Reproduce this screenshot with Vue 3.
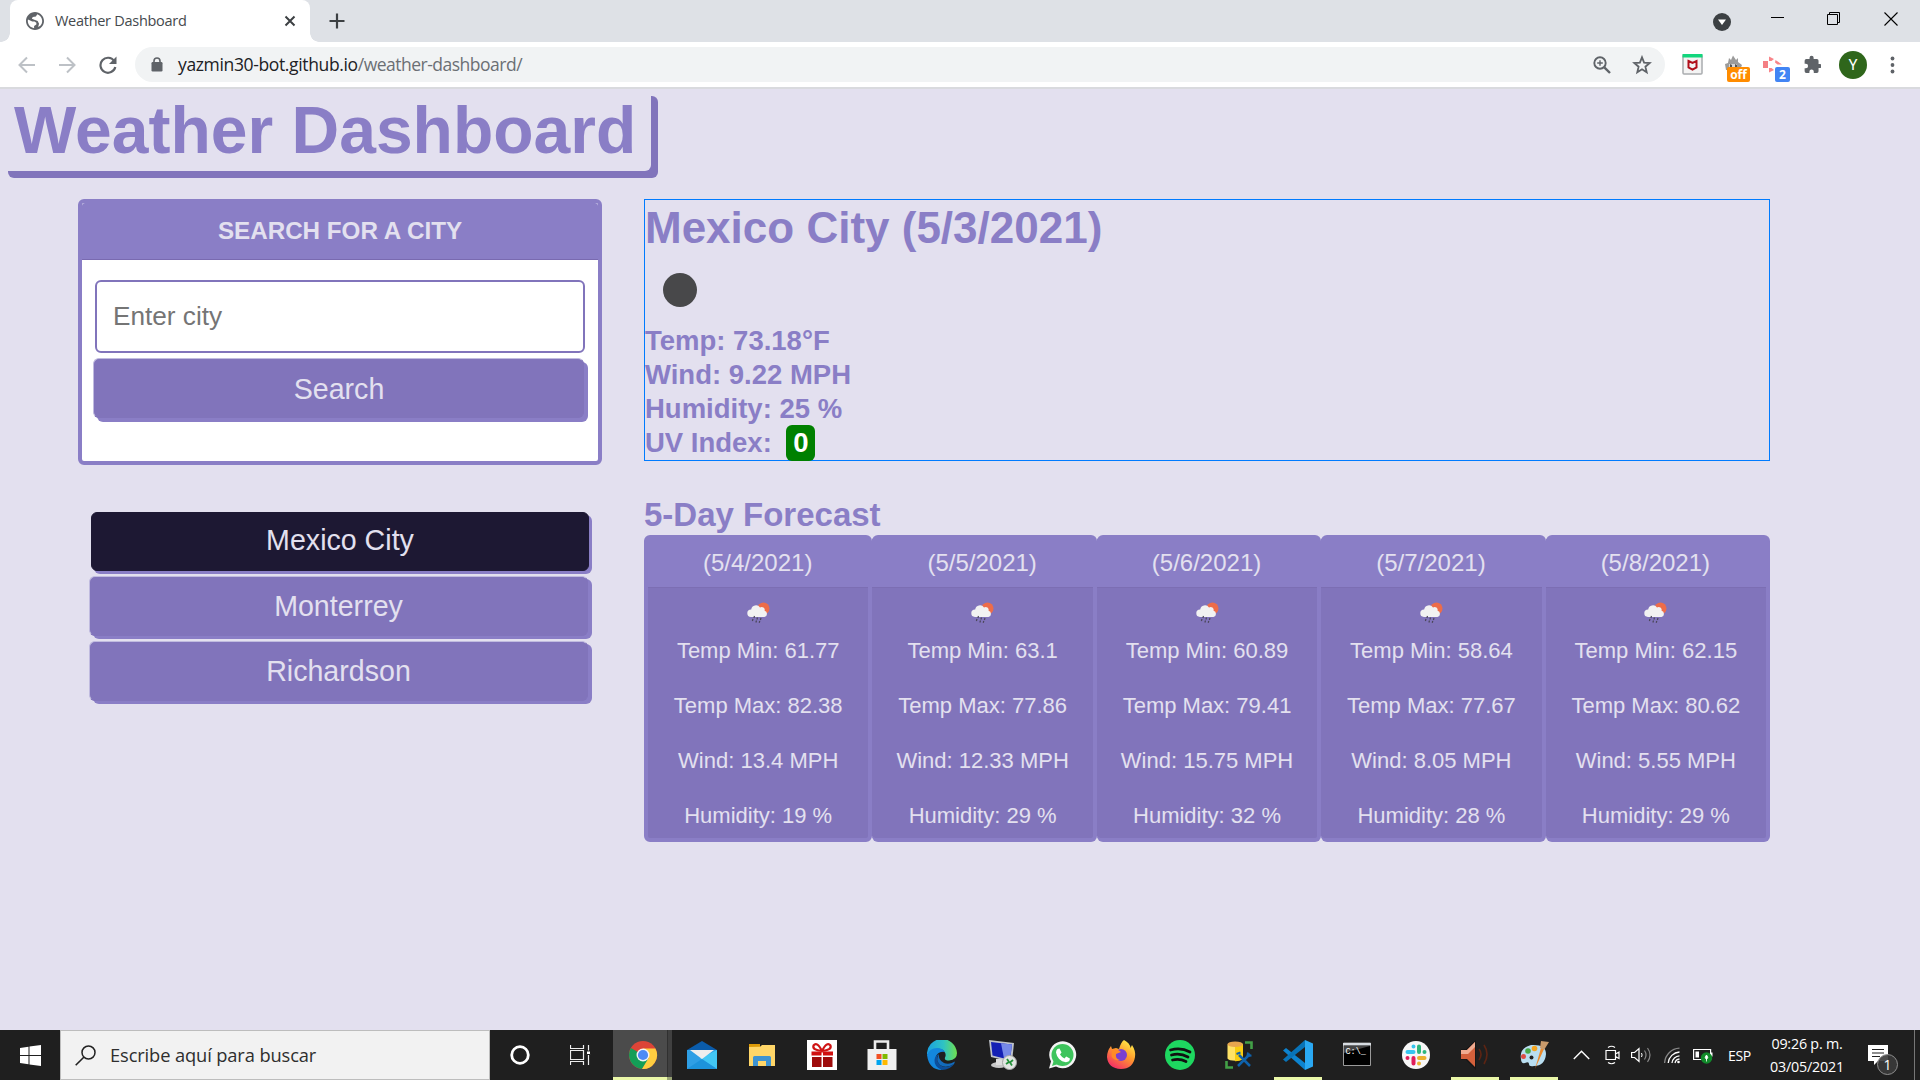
<script setup>
const cities = ['Mexico City', 'Monterrey', 'Richardson']
const activeCity = 'Mexico City'
const forecast = [
  { date: '(5/4/2021)', min: '61.77', max: '82.38', wind: '13.4', humidity: 19 },
  { date: '(5/5/2021)', min: '63.1', max: '77.86', wind: '12.33', humidity: 29 },
  { date: '(5/6/2021)', min: '60.89', max: '79.41', wind: '15.75', humidity: 32 },
  { date: '(5/7/2021)', min: '58.64', max: '77.67', wind: '8.05', humidity: 28 },
  { date: '(5/8/2021)', min: '62.15', max: '80.62', wind: '5.55', humidity: 29 },
]
</script>

<template>
  <div class="screen">
    <header class="tabstrip">
      <div class="tab">
        <svg class="favicon" viewBox="2 2 20 20"><path d="M12 2C6.480 2 2 6.480 2 12s4.480 10 10 10 10-4.480 10-10S17.520 2 12 2zm-1 17.930c-3.950-.49-7-3.850-7-7.930 0-.62.08-1.210.21-1.790L9 12.500h2.500l2 1.500v2l-2.500 1.500zm6.900-2.540l-2.400 1.200 1-3.600-1.500-3L12 11 8.500 9.500l1-2L13 7l1.500-2.600c3 1 5.500 4.200 5.500 7.600 0 2.080-.8 3.970-2.100 5.390z" fill="#5f6368"/></svg>
        <span class="tab-title">Weather Dashboard</span>
        <svg class="tab-close" viewBox="0 0 12 12"><path d="M1.500 1.500l9 9M10.500 1.500l-9 9" stroke="#3c4043" stroke-width="2"/></svg>
      </div>
      <svg class="new-tab" viewBox="0 0 16 16"><path d="M8 .5v15M.5 8h15" stroke="#3c4043" stroke-width="2.200"/></svg>
      <div class="window-buttons">
        <svg width="18" height="18" viewBox="0 0 18 18" class="drop"><circle cx="9" cy="9" r="9" fill="#3c4043"/><path d="M5 6.500h8L9 12z" fill="#fff"/></svg>
        <svg width="13" height="14" viewBox="0 0 13 14"><path d="M0 5.500h13" stroke="#000"/></svg>
        <svg width="14" height="14" viewBox="0 0 14 14"><path d="M.5 2.500h10v10h-10zM2.500 2.500v-2h10v10h-2" fill="none" stroke="#000"/></svg>
        <svg width="14" height="14" viewBox="0 0 14 14"><path d="M.5.5l13 13M13.500.5l-13 13" stroke="#000" stroke-width="1.100"/></svg>
      </div>
    </header>

    <nav class="toolbar">
      <svg class="nav-icon" viewBox="0 0 18 18"><path d="M17 9H2M9 1.500L1.500 9L9 16.500" fill="none" stroke="#bdc1c6" stroke-width="2"/></svg>
      <svg class="nav-icon" viewBox="0 0 18 18"><path d="M1 9h15M9 1.500L16.500 9L9 16.500" fill="none" stroke="#bdc1c6" stroke-width="2"/></svg>
      <svg class="nav-icon reload" viewBox="0 0 18 18"><path d="M15.200 5A7.500 7.500 0 1 0 16.300 11" fill="none" stroke="#5f6368" stroke-width="2.200"/><path d="M17.500.5v7.500h-7.500z" fill="#5f6368"/></svg>
      <div class="address">
        <svg class="lock" viewBox="0 0 12 15"><rect x=".5" y="5" width="11" height="9.500" rx="1.200" fill="#5f6368"/><path d="M3 6V4a3 3 0 0 1 6 0v2" fill="none" stroke="#5f6368" stroke-width="1.600"/></svg>
        <span class="url"><span class="host">yazmin30-bot.github.io</span><span class="path">/weather-dashboard/</span></span>
        <svg class="zoom" viewBox="0 0 18 18"><circle cx="7" cy="7" r="5.700" fill="none" stroke="#5f6368" stroke-width="1.900"/><path d="M11.300 11.300l5.700 5.700" stroke="#5f6368" stroke-width="2.400"/><path d="M7 4.200v5.600M4.200 7h5.600" stroke="#5f6368" stroke-width="1.400"/></svg>
        <svg class="star" viewBox="0 0 20 20"><path d="M10 2.300l2.100 5.300 5.600.4-4.300 3.700 1.300 5.600L10 14.300l-4.700 3 1.300-5.600L2.300 8l5.600-.4z" fill="none" stroke="#5f6368" stroke-width="1.800"/></svg>
      </div>
      <svg class="ext shield" viewBox="0 0 21 21"><rect x="1" y="1" width="19" height="19" rx="1" fill="#f4f4f4" stroke="#a9acaf" stroke-width="1.500"/><path d="M.5 0h20v3.500H.5z" fill="#12d67d"/><path d="M6.500 7l4 2 4-2v6.500l-4 2.200-4-2.200z" fill="none" stroke="#b10f1b" stroke-width="2"/></svg>
      <div class="ext cat">
        <svg viewBox="0 0 18 17"><path d="M1 15L0 9l3-1 1-5 2 2 2-4.500L11 5l2-2v4l4 3-2 5z" fill="#9b9b9b"/><path d="M4 9h8v5H4z" fill="#d6d6d6"/><path d="M5 9l2 1v2H5zM10 9l2 1v2h-2z" fill="#555"/></svg>
        <span class="badge orange">off</span>
      </div>
      <div class="ext record">
        <svg viewBox="0 0 20 17"><path d="M0 5h5v7H0z" fill="#f47f84"/><path d="M6 .5l5 2.500-2.500 2L6 5zM12.500 4L19 8.500h-4.500L12 6.500zM6 12h2.500l2.500 2-5 2.500z" fill="#f8858a"/></svg>
        <span class="badge blue">2</span>
      </div>
      <svg class="ext puzzle" viewBox="0 0 22 22"><path d="M20.500 11H19V7a2 2 0 0 0-2-2h-4V3.500a2.500 2.500 0 0 0-5 0V5H4a2 2 0 0 0-2 2v3.800h1.500a2.700 2.700 0 0 1 0 5.400H2V20a2 2 0 0 0 2 2h3.800v-1.500a2.700 2.700 0 0 1 5.400 0V22H17a2 2 0 0 0 2-2v-4h1.500a2.500 2.500 0 0 0 0-5z" fill="#5f6368"/></svg>
      <span class="avatar">Y</span>
      <svg class="dots" viewBox="0 0 5 18"><circle cx="2.500" cy="2.500" r="1.900" fill="#5f6368"/><circle cx="2.500" cy="9" r="1.900" fill="#5f6368"/><circle cx="2.500" cy="15.500" r="1.900" fill="#5f6368"/></svg>
    </nav>

    <main class="page">
      <h1>Weather Dashboard</h1>
      <div class="columns">
        <aside>
          <section class="search-card">
            <div class="search-head">SEARCH FOR A CITY</div>
            <div class="search-body">
              <input type="text" placeholder="Enter city">
              <button class="btn">Search</button>
            </div>
          </section>
          <div class="cities">
            <button v-for="city in cities" :key="city" class="btn" :class="{ active: city === activeCity }">{{ city }}</button>
          </div>
        </aside>

        <div class="results">
          <section class="current">
            <h2>Mexico City (5/3/2021)</h2>
            <div class="sky"><i></i></div>
            <p>Temp: 73.18°F</p>
            <p>Wind: 9.22 MPH</p>
            <p>Humidity: 25 %</p>
            <p>UV Index: <span class="uv">0</span></p>
          </section>
          <h3>5-Day Forecast</h3>
          <section class="group">
            <article v-for="day in forecast" :key="day.date" class="day">
              <div class="day-head">{{ day.date }}</div>
              <div class="day-body">
                <svg class="rain" viewBox="0 0 23 22"><circle cx="16.500" cy="6.500" r="6" fill="#ed6c49"/><path d="M4 15a3.800 3.800 0 0 1 .2-7.600A4.800 4.800 0 0 1 13 5.500a3 3 0 0 1 4.600 3.300A3.200 3.200 0 0 1 17.500 15z" fill="#f2f2f2"/><path d="M7.500 14l-.6 2M6 17l-.6 2M10.500 15.500l-.6 2M9.500 18.500l-.6 2M14 16l-.6 2M12.800 19l-.6 1.800" stroke="#4a4658" stroke-width="1.200"/></svg>
                <p>Temp Min: {{ day.min }}</p>
                <p>Temp Max: {{ day.max }}</p>
                <p>Wind: {{ day.wind }} MPH</p>
                <p>Humidity: {{ day.humidity }} %</p>
              </div>
            </article>
          </section>
        </div>
      </div>
    </main>

    <footer class="taskbar">
      <div class="start"><svg width="21" height="21" viewBox="0 0 21 21"><path d="M0 3l8.500-1.300V10H0zM9.500 1.500L21 0v10H9.500zM0 11h8.500v8.300L0 18zM9.500 11H21v10L9.500 19.500z" fill="#fff"/></svg></div>
      <div class="find">
        <svg width="21" height="21" viewBox="0 0 21 21"><circle cx="13.500" cy="7.500" r="6.500" fill="none" stroke="#222" stroke-width="1.500"/><path d="M9 12L.7 20.300" stroke="#222" stroke-width="1.600"/></svg>
        <span>Escribe aquí para buscar</span>
      </div>
      <div class="slot cortana"><svg width="22" height="22" viewBox="0 0 22 22"><circle cx="11" cy="11" r="8.300" fill="none" stroke="#fff" stroke-width="2.800"/></svg></div>
      <div class="slot views"><svg width="21" height="20" viewBox="0 0 21 20"><path d="M.5 0v3.500h13V0M.5 5.500h13v9H.5zM.5 20v-3.500h13V20M18.500 0v20" fill="none" stroke="#eee" stroke-width="1.200"/><path d="M16.500 6h4v3.500h-4z" fill="#fff" stroke="#1f1f1f"/></svg></div>

      <div class="slot app chrome">
        <svg viewBox="0 0 30 30"><circle cx="15" cy="15" r="14" fill="#dc4437"/><path d="M15 15L2.900 8A14 14 0 0 0 14 29l7-10z" fill="#149e57"/><path d="M15 8.500h12.400A14 14 0 0 1 14 29L20.600 18z" fill="#ffcd40"/><circle cx="15" cy="15" r="6.500" fill="#f4f4f4"/><circle cx="15" cy="15" r="5.100" fill="#4c8bf5"/></svg>
      </div>
      <div class="slot app wide">
        <svg viewBox="0 0 30 30"><path d="M0 10L15 1l15 9v5H0z" fill="#0a5cab"/><path d="M0 10h30v19H0z" fill="#2f9fe5"/><path d="M13 18.500L30 10v19z" fill="#42c7f5"/><path d="M0 29L15 19 30 29z" fill="#1d93dc"/><path d="M3 10h24l-12 9z" fill="#eee"/></svg>
      </div>
      <div class="slot app wide">
        <svg viewBox="0 0 30 30"><path d="M2 4h11v5H2z" fill="#dc9a08"/><path d="M2 7l11-.2L15 5h13v21H2z" fill="#ffd668"/><path d="M6 26v-8.500Q6 16 7.500 16h15Q24 16 24 17.500V26h-5v-5h-8v5z" fill="#3e93d1"/></svg>
      </div>
      <div class="slot app wide">
        <svg viewBox="0 0 30 30"><path d="M0 0h30v30H0z" fill="#fff"/><path d="M5 17h9.500v10H5zM16 17h9.500v10H16z" fill="#9e0b0b"/><path d="M4.500 11.500h10v4h-10zM16 11.500h10v4H16z" fill="#d01010"/><path d="M15 11Q5 10 6.500 5.500Q10 1 15 11Q20 1 23.500 5.500Q25 10 15 11" fill="none" stroke="#cf1414" stroke-width="2.200"/></svg>
      </div>
      <div class="slot app wide">
        <svg viewBox="0 0 30 30"><path d="M8 10V1.500h13V10" fill="none" stroke="#ededed" stroke-width="2.600"/><path d="M.5 9h29v21H.5z" fill="#f0f0f0"/><path d="M9.500 14h5v5h-5z" fill="#f25022"/><path d="M15.500 14h5v5h-5z" fill="#7fba00"/><path d="M9.500 20h5v5h-5z" fill="#00a4ef"/><path d="M15.500 20h5v5h-5z" fill="#ffb900"/></svg>
      </div>
      <div class="slot app wide">
        <svg viewBox="0 0 30 30"><defs><linearGradient id="edge-a" x1="0" x2="1"><stop offset="0" stop-color="#1aa0e0"/><stop offset=".55" stop-color="#2fc3c3"/><stop offset="1" stop-color="#6fe04f"/></linearGradient></defs><path d="M0 15A15 15 0 0 1 30 13Q30 20 22 20.500Q17 20.500 18 17.500Q20 14 16 10Q8 6 0 15z" fill="url(#edge-a)"/><path d="M0 15Q3 7.500 11 8Q16 8.500 18 12Q12 11 9 16Q7 24 15 30Q2 30 0 15z" fill="#1387dd"/><path d="M11.500 14Q8 20 13 25Q19 29.500 27.500 23.500Q23 30 15 30Q7 27 7.500 20Q8 15.500 11.500 14z" fill="#0c4f9c"/><path d="M12 14Q11 20 17 23Q22 25 28 21.500L27 24Q19 29 13 25Q8 20 12 14z" fill="#126bbd"/></svg>
      </div>
      <div class="slot app wide">
        <svg viewBox="0 0 30 30"><ellipse cx="12" cy="25" rx="8" ry="3" fill="#c8c8c8"/><path d="M9 19h8l1 6H9z" fill="#ddd"/><path d="M2 0l25 3-2 19L4 17z" fill="#bfc3c9"/><path d="M4 2l21 2.500L23 20 5.500 15.500z" fill="#1420b4"/><path d="M14 3.200l11 1.300L23 20l-6-1.500z" fill="#7689e8"/><circle cx="22.500" cy="22.500" r="7" fill="#e2e5e2" stroke="#a5a5a5"/><path d="M19 24l3-2-2-3M26 20l-3 2.500 2 3" fill="none" stroke="#24913a" stroke-width="1.800"/></svg>
      </div>
      <div class="slot app">
        <svg viewBox="0 0 30 30"><path d="M2 28.500l2-7A13.500 13.500 0 1 1 9 26.500z" fill="#f4f4f4"/><circle cx="15.500" cy="15" r="11" fill="#3ec45c"/><path d="M5 26l2-6 4 4z" fill="#3ec45c"/><path d="M10.500 9l2-.6 2 4-1.500 2q2 3 4.500 4l1.700-1.800 3.700 2q0 3.400-4 3.700Q10.500 21 9 12.500 9 10 10.500 9z" fill="#fff"/></svg>
      </div>
      <div class="slot app">
        <svg viewBox="0 0 30 30"><defs><linearGradient id="fox" x1=".8" y1="0" x2=".2" y2="1"><stop offset="0" stop-color="#fff04a"/><stop offset=".45" stop-color="#ff9a2d"/><stop offset="1" stop-color="#f4256b"/></linearGradient></defs><path d="M18 0q6 3 6.500 8l1.500-3q4 6 3 12-2 12-14 12Q2 28.500 1 17q0-6 4-11l1 3 4-1 3 1q2-7 5-9z" fill="url(#fox)"/><circle cx="15" cy="15" r="6" fill="#7b3fd2"/><path d="M6 10q5-2 9 2l-5 2q-1 5 4 6-7 1-8.500-4z" fill="#ff8b27"/></svg>
      </div>
      <div class="slot app">
        <svg viewBox="0 0 30 30"><circle cx="15" cy="15" r="15" fill="#1ed760"/><path d="M5.500 10Q16 7 25 12M6.500 15Q15 12.500 23 17M7.500 20Q14.500 18 21 21.500" fill="none" stroke="#111" stroke-width="2.700" stroke-linecap="round"/></svg>
      </div>
      <div class="slot app">
        <svg viewBox="0 0 30 30"><path d="M3.500 4.500v14a8 3 0 0 0 15.500 0v-14z" fill="#ffe265"/><path d="M11 4h8v14.500q-2 2.500-8 2.700z" fill="#f7cc10"/><ellipse cx="11.200" cy="4.200" rx="7.800" ry="2.800" fill="#e8a64e"/><path d="M21 2.500h6.500V9M2.500 21v6.500H9" fill="none" stroke="#43a047" stroke-width="2.600"/><path d="M15 15l11 11M26 14L14 26" stroke="#0f62ac" stroke-width="2.500"/><path d="M12.500 14l4-1.500M24 12.500l-.5 3.500 4-.5" fill="none" stroke="#0f62ac" stroke-width="2"/></svg>
      </div>
      <div class="slot app running">
        <svg viewBox="0 0 30 30"><path d="M0 10.500L3 8 22 23v7z" fill="#0d83cf"/><path d="M0 19.500L3 22 22 7V0z" fill="#0873b8"/><path d="M22 0l8 3.500v23L22 30z" fill="#2aa8f2"/></svg>
      </div>
      <div class="slot app">
        <svg viewBox="0 0 30 30"><path d="M1.500 3h27v22.500h-27z" fill="#000" stroke="#9a9a9a"/><path d="M1 3h28v2.500H1z" fill="#d8dde2"/><path d="M2 6h26L2 13z" fill="#444"/><text x="3.500" y="14" class="prompt">C:\_</text></svg>
      </div>
      <div class="slot app">
        <svg viewBox="0 0 30 30"><circle cx="15" cy="15" r="14" fill="#f7f7f7"/><g stroke-width="4" stroke-linecap="round"><path d="M12.500 6.500v0M12.500 12h-6" stroke="#36c5f0"/><path d="M18 12V6.500M23.500 12v0" stroke="#2eb67d"/><path d="M18 18h5.500M18 23.500v0" stroke="#ecb22e"/><path d="M12.500 18v5.500M6.500 18v0" stroke="#e01e5a"/></g></svg>
      </div>
      <div class="slot app running">
        <svg viewBox="0 0 30 30"><path d="M1 9h5L16 0v30L6 20H1z" fill="#161616"/><path d="M1 10h6l8-8v25l-8-8H1z" fill="#d3613c"/><path d="M1 10h6l8-8v5l-7 7H1z" fill="#efab90"/><path d="M19 9q4 5 0 11M24 5q6 9 0 19" fill="none" stroke="#5b2413" stroke-width="1.700"/></svg>
      </div>
      <div class="slot app running">
        <svg viewBox="0 0 30 30"><path d="M2 19Q0 8 12 5q15-1 15 9-1 12-12 12-5 1-5-2 0-3-4-1-4 1-4-4z" fill="#b9def0"/><circle cx="9" cy="11" r="2.800" fill="#47a947"/><circle cx="15.500" cy="8.500" r="2.800" fill="#f4a522"/><circle cx="4.500" cy="16.500" r="2.500" fill="#dc4b44"/><circle cx="12.500" cy="17.500" r="2" fill="#222"/><path d="M16 29l6-21 3 1z" fill="#ec8a2b"/><path d="M21 8l1-7 8 1-5 8z" fill="#c89a6b"/></svg>
      </div>

      <div class="tray">
        <svg width="17" height="10" viewBox="0 0 17 10"><path d="M.8 9L8.500 1.200 16.200 9" fill="none" stroke="#fff" stroke-width="1.400"/></svg>
        <svg width="16" height="20" viewBox="0 0 16 20"><path d="M1 5.500h9.500v9H1zM10.500 9l3.500-2v6.500l-3.500-2M3 2.500Q6.500 0 10 2.500M3 17.500Q6.500 20 10 17.500" fill="none" stroke="#fff" stroke-width="1.200"/></svg>
        <svg width="21" height="18" viewBox="0 0 21 18"><path d="M.6 6.500h3L8 2.500v13l-4.400-4H.6z" fill="none" stroke="#fff" stroke-width="1.200"/><path d="M10.500 7q1.200 2 0 4" fill="none" stroke="#fff"/><path d="M13.500 4.500q3 4.500 0 9M16.500 2q5 7 0 14" fill="none" stroke="#888" stroke-width="1.200"/></svg>
        <svg width="16" height="17" viewBox="0 0 16 17"><path d="M.6 16A15.500 15.500 0 0 1 15.500 1.200" fill="none" stroke="#888" stroke-width="1.300"/><path d="M4.200 16A12 12 0 0 1 15.500 5M8 16a8 8 0 0 1 7.500-7.200M11 16a5 5 0 0 1 4.500-4" fill="none" stroke="#fff" stroke-width="1.300"/><circle cx="14.500" cy="15" r="1.300" fill="#fff"/></svg>
        <svg width="20" height="17" viewBox="0 0 20 17"><path d="M.6 2.500h17v10H.6z" fill="none" stroke="#fff" stroke-width="1.200"/><path d="M2.500 4.500H6v6H2.500zM18 5.500h1.500v4H18z" fill="#fff"/><circle cx="13.500" cy="11" r="5.700" fill="#118a2a"/><path d="M13.500 8q2.600 2.500 0 4.500-2.600-2 0-4.500M13.500 11v3.500" fill="#fff" stroke="#fff" stroke-width=".8"/></svg>
        <span class="lang">ESP</span>
        <div class="clock"><span>09:26 p. m.</span><span>03/05/2021</span></div>
        <div class="notes">
          <svg width="20" height="20" viewBox="0 0 20 20"><path d="M0 0h20v16h-10l-4 4v-4H0z" fill="#fff"/><path d="M4 4.500h12M4 8h12M4 11.500h8" stroke="#1f1f1f" stroke-width="1.200"/></svg>
          <span class="count">1</span>
        </div>
        <i class="peek"></i>
      </div>
    </footer>
  </div>
</template>

<style>
body { margin: 0; overflow: hidden; }
</style>

<style scoped>
* { box-sizing: border-box; }
svg { display: block; flex: none; }
p, h1, h2, h3 { margin: 0; }
.screen { width: 1920px; height: 1080px; display: flex; flex-direction: column; font-family: "Liberation Sans", Arial, sans-serif; overflow: hidden; background: #e3e0ef; }

.tabstrip { height: 42px; flex: none; background: #dee1e6; display: flex; align-items: center; }
.tab { position: relative; margin-left: 10px; width: 300px; height: 42px; background: #fff; border-radius: 8px 8px 0 0; display: flex; align-items: center; padding: 0 14px 0 16px; }
.tab::before, .tab::after { content: ""; position: absolute; bottom: 0; width: 9px; height: 9px; }
.tab::before { left: -9px; background: radial-gradient(circle at 0 0, #dee1e6 8.500px, #fff 9px); }
.tab::after { right: -9px; background: radial-gradient(circle at 100% 0, #dee1e6 8.500px, #fff 9px); }
.favicon { width: 18px; height: 18px; }
.tab-title { flex: 1; margin: -2px 0 0 11px; font: 14.500px "Open Sans", sans-serif; letter-spacing: -.28px; color: #45494d; white-space: nowrap; }
.tab-close { width: 12px; height: 12px; }
.new-tab { width: 16px; height: 16px; margin-left: 19px; }
.window-buttons { margin-left: auto; display: flex; align-items: center; padding: 0 22px 4px 0; }
.window-buttons svg { margin-right: 43px; }
.window-buttons svg.drop { margin: 5px 40px 0 0; }
.window-buttons svg:last-child { margin-right: 0; }

.toolbar { height: 47px; flex: none; background: #fff; border-bottom: 2px solid #d9dade; display: flex; align-items: center; padding-left: 18px; }
.nav-icon { width: 18px; height: 18px; margin-right: 22px; }
.reload { margin: 0 21px 0 1px; }
.address { width: 1530px; height: 35px; margin-left: -3px; border-radius: 18px; background: #f1f3f4; display: flex; align-items: center; padding: 0 13px 0 16px; }
.lock { width: 12px; height: 15px; }
.url { flex: 1; margin: -1px 0 0 15px; font: 17.500px "Open Sans", sans-serif; letter-spacing: -.36px; white-space: nowrap; }
.host { color: #202124; }
.path { color: #6b6f74; letter-spacing: -.5px; }
.zoom { width: 18px; height: 18px; margin-right: 21px; }
.star { width: 20px; height: 20px; }
.ext { position: relative; flex: none; }
.shield { width: 21px; height: 21px; margin-left: 17px; }
.cat { width: 25px; height: 30px; margin-left: 22px; padding-top: 5px; }
.cat svg { width: 18px; height: 17px; }
.record { width: 27px; height: 30px; margin-left: 13px; padding-top: 6px; }
.record svg { width: 20px; height: 17px; }
.badge { position: absolute; right: 0; bottom: -2px; height: 15px; border-radius: 2px; color: #fff; text-align: center; font: bold 12px/15px "Open Sans", sans-serif; }
.orange { width: 23px; background: #ff8c00; }
.blue { width: 15px; background: #4285f4; }
.puzzle { width: 18px; height: 18px; margin: 0 0 2px 13px; }
.avatar { flex: none; width: 28px; height: 28px; margin-left: 18px; border-radius: 50%; background: #2f661b; color: #fff; text-align: center; font: 15px/28px Roboto, sans-serif; }
.dots { width: 5px; height: 18px; margin-left: 23px; }

.page { flex: 1; min-height: 0; background: #e3e0ef; color: #8a7ec6; }
h1 { width: 650px; height: 82px; margin-left: 1px; padding-left: 13px; font-size: 66px; line-height: 82px; white-space: nowrap; border-radius: 6px; box-shadow: 7px 7px 0 #8174bb; }
.columns { display: flex; margin-top: 28px; padding-left: 78px; }
aside { width: 524px; }
.search-card { height: 266px; border: 4px solid #8a7ec6; border-radius: 6px; background: #fff; }
.search-head { height: 57px; border-bottom: 1px solid #796ab0; border-radius: 3px 3px 0 0; background: #8a7ec6; color: #e3e0ef; font-weight: bold; font-size: 24.200px; line-height: 56px; text-align: center; }
.search-body { padding: 20px 13px; display: flex; flex-direction: column; }
input { height: 73px; border: 2px solid #8174bb; border-radius: 6px; padding: 0 16px; font: 26.200px "Liberation Sans", Arial, sans-serif; background: #fff; outline: none; }
input::placeholder { color: #757575; opacity: 1; }
.btn { height: 60px; border: 1px solid #c0bbdf; border-right-color: #8174bb; border-bottom-color: #8174bb; border-radius: 6px; background: #8174bb; color: #e3e0ef; font: 28.600px/58px "Liberation Sans", Arial, sans-serif; padding: 0; box-shadow: 4px 3px 0 #8a7ec6; text-align: center; }
.search-body .btn { margin: 5px 1px 0 -2px; padding: 1px 0 0 1px; box-shadow: 4px 4px 0 #8a7ec6; }
.cities { margin: 47px 14px 0 11px; display: flex; flex-direction: column; gap: 5px; }
.btn.active { background: #1d1833; border-color: #1d1833; height: 59px; line-height: 55px; padding-bottom: 2px; margin: 0 -1px 0 2px; box-shadow: 3px 3px 0 #8a7ec6; }

.results { margin-left: 42px; width: 1126px; }
.current { height: 262px; border: 1px solid #007bff; }
h2 { font-size: 44px; line-height: 56px; }
.sky { height: 68px; padding: 17px 0 0 18px; }
.sky i { display: block; width: 34px; height: 34px; border-radius: 50%; background: #48484a; }
.current p { font-weight: bold; font-size: 27.500px; line-height: 34px; height: 34px; white-space: nowrap; }
.uv { display: inline-block; margin-left: 7px; width: 29px; height: 36px; line-height: 36px; margin-top: -1px; border-radius: 6px; background: #008000; color: #fff; text-align: center; vertical-align: top; }
h3 { margin-top: 33px; font-size: 33px; line-height: 41px; }
.group { display: flex; height: 307px; color: #e3e0ef; }
.day { flex: 1 0 0; border: 4px solid #8a7ec6; border-radius: 6px; background: #8174bb; text-align: center; }
.day + .day { border-left: 0; }
.day-head { height: 49px; background: #8a7ec6; border-bottom: 1px solid #7c6eb3; font-size: 24px; line-height: 48px; padding-right: 1px; }
.day-body { padding-top: 14px; display: flex; flex-direction: column; align-items: center; }
.rain { width: 23px; height: 22px; margin-bottom: 9px; }
.day p { font-size: 22px; line-height: 35px; margin-bottom: 20px; white-space: nowrap; }

.taskbar { height: 50px; flex: none; background: #1f1f1f; display: flex; color: #fff; font-family: "Open Sans", sans-serif; }
.start { width: 60px; display: flex; align-items: center; padding-left: 20px; }
.find { width: 430px; background: #f2f2f2; border: 1px solid #bdbdbd; display: flex; align-items: center; gap: 14px; padding-left: 14px; color: #2e2e2e; font-size: 18.300px; letter-spacing: -.12px; }
.find span { margin-top: -2px; }
.slot { position: relative; width: 59px; flex: none; display: flex; align-items: center; justify-content: center; }
.wide { width: 60px; }
.cortana { width: 60px; }
.views { width: 63px; padding-right: 3px; }
.app svg { width: 30px; height: 30px; }
.chrome { background: linear-gradient(90deg, #4b4b4b 54px, #303030 54px, #303030 55px, #404040 55px); }
.chrome::after, .running::after { content: ""; position: absolute; bottom: 0; left: 6px; width: 48px; height: 3px; background: #eaf7a8; }
.chrome::after { left: 0; width: 59px; background: linear-gradient(90deg, #eaf7a8 54px, #9aa574 54px); }
.prompt { font: 8.500px "Liberation Mono", monospace; fill: #fff; }
.tray { flex: 1; display: flex; align-items: center; padding-left: 10px; }
.tray svg { margin-right: 12px; }
.tray svg:nth-child(1) { margin-right: 15px; }
.tray svg:nth-child(2) { margin-right: 10px; }
.tray svg:nth-child(3) { margin-right: 12px; }
.tray svg:nth-child(4) { margin-right: 13px; }
.lang { width: 24px; font-size: 14px; letter-spacing: -.4px; margin-left: 3px; }
.clock { width: 78px; margin-left: 16px; display: flex; flex-direction: column; align-items: center; font-size: 14.300px; line-height: 23px; letter-spacing: -.2px; white-space: nowrap; }
.notes { position: relative; margin-left: 22px; width: 30px; height: 20px; }
.count { position: absolute; left: 9px; top: 9px; width: 21px; height: 21px; border-radius: 50%; border: 1px solid #8f8f8f; background: #3a3a3ae6; text-align: center; font-size: 14px; line-height: 19px; }
.peek { margin-left: auto; margin-right: 5px; width: 1px; height: 50px; background: #777; }
</style>
